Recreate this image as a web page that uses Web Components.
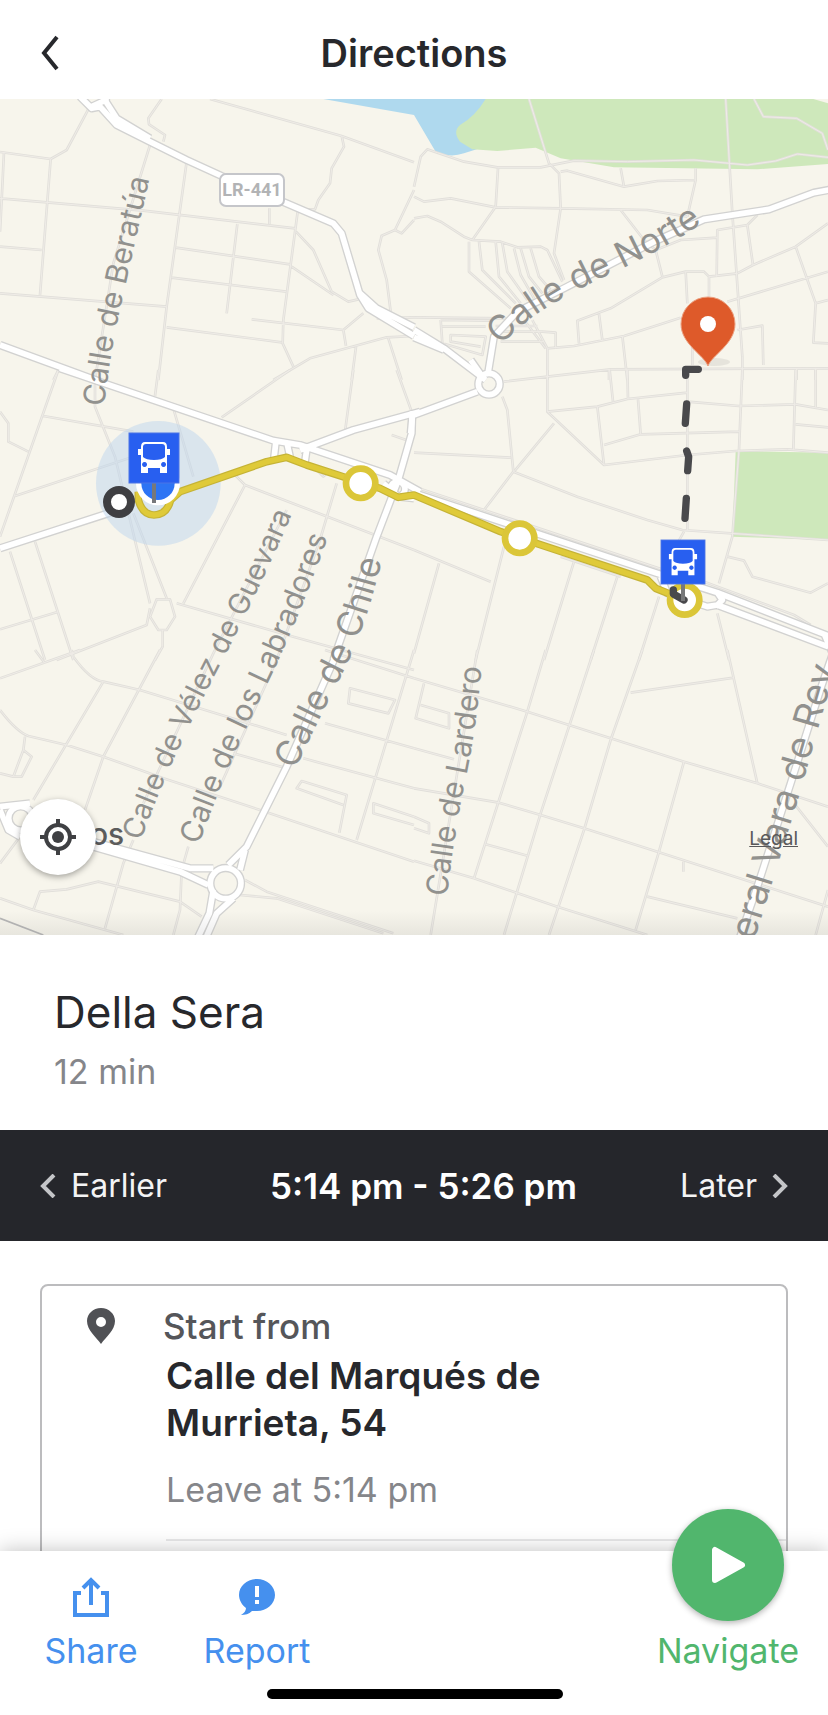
<!DOCTYPE html>
<html lang="en">
<head>
<meta charset="utf-8">
<meta name="viewport" content="width=device-width, initial-scale=1">
<title>Directions</title>
<style>
    body {
        margin: 0;
        background: #fff;
        color: #27282c;
        font-family: Inter, "Liberation Sans", sans-serif;
    }
</style>
</head>
<body>
<directions-app>
    <page-header slot="header">Directions</page-header>
    <route-map></route-map>
    <trip-summary>
        Della Sera
        <span slot="duration">12 min</span>
    </trip-summary>
    <time-bar earlier="Earlier" later="Later">5:14 pm - 5:26 pm</time-bar>
    <step-card>
        <span slot="title">Start from</span>
        <span slot="place">Calle del Marqués de Murrieta, 54</span>
        <span slot="time">Leave at 5:14 pm</span>
    </step-card>
    <action-bar slot="footer">
        <action-button icon="share">Share</action-button>
        <action-button icon="report">Report</action-button>
        <action-button icon="navigate" main>Navigate</action-button>
    </action-bar>
</directions-app>

<script>
class BaseElement extends HTMLElement {
    constructor() {
        super();
        this.attachShadow({mode: 'open'});
    }
    connectedCallback() {
        const template = document.createElement('template');
        template.innerHTML = this.getStyles() + this.getTemplate();
        this.shadowRoot.replaceChildren(template.content.cloneNode(true));
    }
}

class DirectionsApp extends BaseElement {
    getTemplate() {
        return `
            <slot name="header"></slot>
            <main><slot></slot></main>
            <slot name="footer"></slot>
        `;
    }
    getStyles() {
        return `
        <style>
            :host {
                display: flex;
                flex-direction: column;
                height: 100vh;
            }
            main {
                flex: 1;
                min-height: 0;
                overflow: auto;
                scrollbar-width: none;
            }
        </style>
        `;
    }
}
customElements.define('directions-app', DirectionsApp);

class PageHeader extends BaseElement {
    getTemplate() {
        return `
            <button aria-label="Back">
                <svg width="20" height="36" viewBox="0 0 20 36"><path d="M17 2 4 18l13 16" fill="none" stroke="#27282c" stroke-width="4"/></svg>
            </button>
            <h1><slot></slot></h1>
        `;
    }
    getStyles() {
        return `
        <style>
            :host {
                display: grid;
                grid-template-columns: 60px 1fr 60px;
                align-items: center;
                padding: 27px 20px 20px;
            }
            button {
                display: flex;
                justify-content: center;
                padding: 8px;
                border: 0;
                background: none;
            }
            h1 {
                margin: 0;
                font-size: 38px;
                line-height: 52px;
                font-weight: 600;
                text-align: center;
            }
        </style>
        `;
    }
}
customElements.define('page-header', PageHeader);

// Base map tiles: [x, y, streets, roads]
const tiles = [
    [0, 270, `M268 52 200 180 152 207 0 186M485 27 445 85 447 103 495 135 490 155M630 27 1025 138 1242 217
        M1025 138 1032 170 995 235 990 280 955 330 945 358 920 358M12 186 5 330 0 425M152 207 120 615
        M0 325 430 362 885 415M0 470 125 480M450 165 340 520 285 870M560 215 500 650 475 870M808 355V402
        M712 402 680 670M893 365 850 690 848 760 880 830M528 473 870 523M515 563 858 605M0 610 500 650
        M500 712 845 757M755 688 1030 720 1090 670M1030 720 1038 768M888 425 940 480 995 605 1045 635 1075 628
        M875 530 1000 615M1242 300 1185 420 1145 437 1135 480 1160 570 1172 665M1185 420 1205 430 1242 390
        M820 870 930 805 1160 742 1242 738M1068 770 1055 870M1165 745 1205 870M1130 685 1242 682M175 840 160 870`,
        `M240 20 275 55 300 50 350 105 450 155 560 210 665 258 860 340 1000 400 1025 430 1080 615 1105 655 1242 738
        M318 20 318 35 350 85 450 145M275 50 318 30M1080 610 1130 655 1242 712M0 765 300 875`],
    [1242, 270, `M0 290 20 200 40 178 70 188 150 215 250 232 380 232 480 212 640 215 840 210 1000 225 1085 213 1150 192 1242 202
        M345 27 405 220 435 250 440 355 420 490 450 570M252 235 245 350 175 450M440 245 460 242 630 290 730 273 845 270
        M620 235 630 290M845 235 845 270 820 380M0 320 30 335 110 325 245 352 440 355 700 360 820 380
        M0 385 40 378 80 395 150 440 175 450 260 455 310 472 380 470 400 480 445 575M165 455V545L290 655
        M195 455 205 540 305 640M245 455 255 560 320 640M265 460 280 545 340 630M300 475 320 555 360 625
        M320 475 345 560 385 610M350 475 375 560 410 600M935 27 955 370 985 800 985 870
        M1020 27 1048 80 1148 85 1225 130 1242 180M620 360 690 450 725 480 745 560M725 480 800 450 910 443
        M908 560 910 420 1000 405 1030 375M1000 405 1017 525
        M1242 400 1145 470 1017 525 970 550 885 560 870 545 815 545 745 562 590 655 490 692 495 760
        M1145 470 1205 640 1242 630M1205 640 1198 758 1242 760M1242 545 940 635M815 545 820 640M885 560V620
        M555 672 565 750M400 775 480 768 630 738 800 683M625 738 640 870M970 720 1045 707 1048 825
        M400 870V775L355 690M270 875 590 838 1242 835M585 840V870M835 760V825M1148 835V870M1205 835V870
        M0 682 280 685M80 690 85 760M80 690 230 692M85 710H215M85 760 205 795 215 740 110 735V755L200 770
        M260 725 385 725 425 728V775M260 755H390M245 708H370M330 690 395 775`,
        `M1260 297 1200 308 1065 358 870 388 720 455 450 595 310 665 240 740 222 850M0 720 90 775 215 870M0 742 90 780`],
    [0, 1110, `M175 0 0 500M475 0 465 78M870 0 665 142M1060 0 1035 185M1190 0 1235 125M0 125 25 160V215L85 245
        M130 138 400 185M285 30V110L345 260 450 700M45 378 400 260M520 115 580 320M400 430 500 685M30 545 135 870
        M105 515 220 870M0 778 175 725M170 870 440 765 450 715M470 688H510L525 740 500 780H475L450 740ZM488 780V830L465 870
        M530 700 880 800 1242 900M550 700 735 345 1242 540M735 345 700 310M1010 340 960 510 830 870 660 1250
        M860 420 640 850 430 1300M1175 195 1225 212M960 240 1000 260M950 300 970 320 990 300`,
        `M180 -5 820 212 900 225 1170 315 1260 365M0 535 340 425M900 240 1060 180 1260 125M1237 125 1235 190 1195 330 1130 500 1000 870
        M828 212 822 265M860 215 870 260M920 240 915 275M1150 340 1195 380 1242 385`],
    [1242, 1110, `M265 80 280 120 298 305 210 420M0 248 290 263M298 305 490 380 700 450 805 480 1242 510M300 305 420 160
        M400 0V125L570 285 820 255 965 243 1120 238 1242 248M400 125 550 110 640 87 820 68M550 110 570 285
        M570 225 680 193 975 185M672 88 680 193M640 0 642 87M587 0 597 95M985 0 975 240 955 500 915 640M820 0V480
        M820 95 975 108 1145 103 1242 120M1145 0 1138 240M1145 163 1242 172M1205 0V112M810 485 790 520
        M940 560 990 572 1015 620 1190 668 1242 640M0 540 230 635M75 580 0 850M270 530 185 870M480 575 390 870
        M610 620 530 870M735 680 675 870M910 730 945 870M440 560 620 620M0 350 750 600M870 635 1140 735 1190 765`,
        `M190 65-5 137M-4 125-10 190M-5 367 730 610 910 668 1242 797M740 620 760 670 880 710 910 705 1242 830M910 668 925 690 905 710M170 -30 205 20
        M1230 790 1260 860`],
    [0, 1950, `M0 85 240 0M105 0 135 40M215 0 220 20Q270 90 310 95L420 120 860 255M975 220 1242 295M700 310 860 355
        M910 325 1242 415M0 180Q50 245 85 258L200 285 310 320 490 385 780 480 1242 635M480 0 310 320 255 480M310 95 100 450
        M75 260 70 300 40 380 0 370M70 300 95 320 65 380H40M975 0 1242 85M1242 0 1070 570M1050 115 1185 150 1165 190 1045 160Z
        M1030 465 890 415 905 393 1040 435 1018 548M1242 500 1120 460V490L1242 525M400 570 370 640 315 835
        M565 590 545 660 540 780 520 855M0 745 100 780 370 855M100 780 120 725 200 718 295 695 540 755 605 800
        M735 690 800 725 1180 850M720 735 830 745 1150 850M60 560 0 640`,
        `M280 575 570 655 640 655M280 590 540 665 625 705M1015 0 860 350 740 590 685 645M720 660 735 600M700 745 650 790 615 870M640 720 628 790 590 870
        M0 470 90 460M0 480 25 540 60 560`],
    [1242, 1950, `M190 0 50 855M395 0 340 185 180 685M540 0 380 490 270 855M685 0 590 270 510 540 405 855M650 128 960 83
        M940 0 1030 400M0 85 340 185 590 265 810 335 1030 400 1242 470M0 295 120 328M0 415 255 458 380 495 510 535 730 605 1242 770
        M215 583 340 617M0 632 180 685 430 770 700 855M810 335 735 605 665 840M700 740 970 805M1242 720 1205 855
        M1140 460 1242 590M30 100 5 205 105 235V190L20 165M0 500 45 520V550L0 535M808 635V665`,
        `M1260 0 1222 110 1130 400 1030 710 975 870`]
];

const busSign = `
    <rect width="50" height="50" fill="#285ff0" stroke="#4b74e6"/>
    <path fill="#fff" fill-rule="evenodd" d="M16 9h18q4 0 4 5v2h3v6h-3v18h-7v-5H19v5h-7V22H9v-6h3v-2q0-5 4-5zM17 11q-3 0-3 3v10q3 3 11 3t11-3V14q0-3-3-3zM15.500 29a2.500 2.500 0 1 0 .1 0zM34.500 29a2.500 2.500 0 1 0 .1 0z"/>
`;

class RouteMap extends BaseElement {
    getRoads() {
        const layer = (index, cls) => tiles.map(t => `<path class="${cls}" transform="translate(${t[0]} ${t[1]})" d="${t[index]}"/>`).join('');
        const rings = cls => `
            <circle class="${cls}" cx="1467" cy="1152" r="32"/>
            <circle class="${cls}" cx="677" cy="2650" r="46"/>
            <circle class="${cls}" cx="62" cy="2455" r="36"/>
            <circle class="${cls}" cx="1193" cy="1467" r="22"/>`;
        return layer(2, 'street') + layer(2, 'street-in')
            + layer(3, 'road') + rings('road') + layer(3, 'road-in') + rings('road-in');
    }
    getTemplate() {
        return `
        <svg viewBox="0 0 828 836" role="img" aria-label="Route map">
            <defs>
                <linearGradient id="fade" x2="0" y2="1"><stop stop-color="#888" stop-opacity="0"/><stop offset="1" stop-color="#888" stop-opacity=".14"/></linearGradient>
                <path id="p1" d="M104 308Q110 255 121 206T154 60"/>
                <path id="p2" d="M502 247Q526 214 604 178T712 116"/>
                <path id="p3" d="M141 742Q164 674 218 570T304 386"/>
                <path id="p4" d="M199 746Q222 678 263 594T336 414"/>
                <path id="p5" d="M295 671Q318 622 344 571T388 434"/>
                <path id="p6" d="M447 798Q454 735 466 678T483 550"/>
                <path id="p7" d="M754 842 797 704 818 630 850 520"/>
            </defs>
            <svg width="828" height="836" viewBox="0 297 2484 2508">
                <rect y="297" width="2484" height="2508" fill="#f7f5ec"/>
                <path fill="#afd9ee" d="M970 297 1242 345 1307 455Q1350 475 1392 460L1430 448 1470 297Z"/>
                <path fill="#cee8bb" d="M1457 297Q1425 350 1380 375 1357 395 1380 425L1417 448 1492 453 1607 443 1682 475 1842 502 2272 508 2484 492V310L2440 297ZM2207 1353 2484 1358V1620L2197 1610Z"/>
                ${this.getRoads()}
                <path d="M0 2755 130 2805" stroke="#b5b5b5" stroke-width="5"/>
                <circle cx="475" cy="1450" r="187" fill="#bed6ee" fill-opacity=".5"/>
                <g fill="none" stroke-linejoin="round">
                    <path class="route-edge" d="M415 1475V1500Q428 1545 462 1545 500 1545 512 1500L540 1475 800 1385 860 1372 920 1395 1035 1432 1140 1465 1195 1492 1242 1485 1502 1595 1942 1740 1967 1765 2054 1800"/>
                    <path class="route" d="M415 1475V1500Q428 1545 462 1545 500 1545 512 1500L540 1475 800 1385 860 1372 920 1395 1035 1432 1140 1465 1195 1492 1242 1485 1502 1595 1942 1740 1967 1765 2054 1800"/>
                </g>
                <g class="stop">
                    <circle cx="1082" cy="1450" r="44"/>
                    <circle cx="1559" cy="1615" r="44"/>
                    <circle cx="2054" cy="1800" r="44"/>
                </g>
                <path class="walk" d="M2095 1108H2057V1126M2060 1212 2056 1270M2060 1353 2066 1370 2063 1412M2059 1495 2055 1555M2020 1770V1782L2052 1800"/>
                <circle cx="474" cy="1450" r="66" fill="#fff"/>
                <circle cx="474" cy="1450" r="50" fill="#2d74f4"/>
                <circle cx="357" cy="1506" r="36" fill="#fff" stroke="#3f3f42" stroke-width="24"/>
            </svg>
            <g class="label">
                <text class="small"><textPath href="#p1">Calle de Beratúa</textPath></text>
                <text class="large"><textPath href="#p2">Calle de Norte</textPath></text>
                <text class="long"><textPath href="#p3">Calle de Vélez de Guevara</textPath></text>
                <text class="small"><textPath href="#p4">Calle de los Labradores</textPath></text>
                <text class="large"><textPath href="#p5">Calle de Chile</textPath></text>
                <text class="small"><textPath href="#p6">Calle de Lardero</textPath></text>
                <text class="huge"><textPath href="#p7">eral Vara de Rey</textPath></text>
                <text class="town" x="90" y="746">os</text>
            </g>
            <rect x="220" y="75" width="64" height="32" rx="6" fill="#fff" stroke="#c5c6ca" stroke-width="2"/>
            <text class="shield" x="252" y="97">LR-441</text>
            <path d="M154 382v22" stroke="#77787a" stroke-width="4"/>
            <g transform="translate(129 334)">${busSign}</g>
            <path d="M683 484v18" stroke="#77787a" stroke-width="4"/>
            <g transform="translate(661 441) scale(.88)">${busSign}</g>
            <ellipse cx="714" cy="263" rx="16" ry="4" fill="#888" fill-opacity=".15"/>
            <path d="M708 267C704 256 681 245 681 225A27 27 0 0 1 735 225C735 245 712 256 708 267Z" fill="#de5a2a" stroke="#eca080"/>
            <circle cx="708" cy="225" r="8" fill="#fff"/>
            <rect y="812" width="828" height="24" fill="url(#fade)"/>
        </svg>
        <button aria-label="My location">
            <svg width="36" height="36" viewBox="0 0 36 36"><circle cx="18" cy="18" r="12" fill="none" stroke="#3f4043" stroke-width="4"/><circle cx="18" cy="18" r="6" fill="#3f4043"/><path d="M18 0v6M18 30v6M0 18h6M30 18h6" stroke="#3f4043" stroke-width="4"/></svg>
        </button>
        <a href="#legal">Legal</a>
        `;
    }
    getStyles() {
        return `
        <style>
            :host {
                display: block;
                position: relative;
                overflow: hidden;
            }
            :host > svg {
                display: block;
            }
            .street, .street-in, .road, .road-in {
                fill: none;
                stroke-linejoin: round;
            }
            .street { stroke: #e1dfda; stroke-width: 8; }
            .street-in { stroke: #efece7; stroke-width: 3; }
            .road { stroke: #d2d2d1; stroke-width: 25; }
            .road-in { stroke: #fff; stroke-width: 17; }
            .route-edge { stroke: #c5b336; stroke-width: 23; }
            .route { stroke: #dfca39; stroke-width: 16; }
            .stop { fill: #fff; stroke: #dbc638; stroke-width: 20; }
            .walk { fill: none; stroke: #49494c; stroke-width: 22; stroke-linecap: round; stroke-linejoin: round; }
            .label { fill: #91918e; }
            .small { font-size: 30px; }
            .long { font-size: 29px; }
            .large { font-size: 35px; }
            .huge { font-size: 37px; }
            .town { font-size: 30px; font-weight: 500; fill: #5c5c5c; }
            .shield {
                font: bold 18px Roboto, sans-serif;
                fill: #b2b3b5;
                text-anchor: middle;
            }
            button {
                position: absolute;
                left: 20px;
                bottom: 60px;
                width: 76px;
                height: 76px;
                padding: 20px;
                border: 0;
                border-radius: 50%;
                background: #fff;
                box-shadow: 0 2px 6px rgba(0, 0, 0, .35);
            }
            a {
                position: absolute;
                right: 30px;
                bottom: 84px;
                color: #58585a;
                font-size: 19px;
                line-height: 24px;
            }
        </style>
        `;
    }
}
customElements.define('route-map', RouteMap);

class TripSummary extends BaseElement {
    getTemplate() {
        return `
            <h2><slot></slot></h2>
            <p><slot name="duration"></slot></p>
        `;
    }
    getStyles() {
        return `
        <style>
            :host {
                display: block;
                padding: 47px 54px 37px;
            }
            h2 {
                margin: 0;
                font-size: 44px;
                line-height: 60px;
                font-weight: 400;
            }
            p {
                margin: 8px 0 0;
                font-size: 34px;
                line-height: 43px;
                color: #85868a;
            }
        </style>
        `;
    }
}
customElements.define('trip-summary', TripSummary);

class TimeBar extends BaseElement {
    getTemplate() {
        return `
            <button>
                <svg width="16" height="24" viewBox="0 0 16 24"><path d="M14 1 3 12l11 11"/></svg>
                ${this.getAttribute('earlier')}
            </button>
            <strong><slot></slot></strong>
            <button>
                ${this.getAttribute('later')}
                <svg width="16" height="24" viewBox="0 0 16 24"><path d="m2 1 11 11L2 23"/></svg>
            </button>
        `;
    }
    getStyles() {
        return `
        <style>
            :host {
                display: flex;
                justify-content: space-between;
                align-items: center;
                padding: 34px 40px 33px;
                background: #25262b;
                color: #fff;
            }
            button {
                display: flex;
                align-items: center;
                gap: 15px;
                padding: 0;
                border: 0;
                background: none;
                color: #f4f4f5;
                font: inherit;
                font-size: 32px;
                line-height: 44px;
            }
            strong {
                font-size: 35px;
                line-height: 44px;
                font-weight: 600;
            }
            path {
                fill: none;
                stroke: #c4c5c8;
                stroke-width: 4;
            }
        </style>
        `;
    }
}
customElements.define('time-bar', TimeBar);

class StepCard extends BaseElement {
    getTemplate() {
        return `
            <section>
                <svg width="28" height="36" viewBox="0 0 28 36"><path fill="#505155" fill-rule="evenodd" d="M14 0C6 0 0 6 0 13c0 9 9 16 14 23 5-7 14-14 14-23C28 6 22 0 14 0zm0 9a5 5 0 1 1 0 10 5 5 0 0 1 0-10z"/></svg>
                <div>
                    <h3><slot name="title"></slot></h3>
                    <p class="place"><slot name="place"></slot></p>
                    <p class="time"><slot name="time"></slot></p>
                    <hr>
                </div>
            </section>
        `;
    }
    getStyles() {
        return `
        <style>
            :host {
                display: block;
                padding: 43px 40px 0;
            }
            section {
                display: flex;
                gap: 48px;
                padding: 18px 0 80px 45px;
                border: 2px solid #bcbcbe;
                border-radius: 8px;
            }
            svg {
                flex: none;
                margin-top: 4px;
            }
            div {
                flex: 1;
            }
            h3, p {
                margin: 0;
            }
            h3 {
                font-size: 35px;
                line-height: 44px;
                font-weight: 500;
                color: #55565a;
            }
            .place {
                max-width: 480px;
                padding: 4px 0 0 3px;
                font-size: 37px;
                line-height: 47px;
                font-weight: 600;
            }
            .time {
                padding: 22px 0 0 3px;
                font-size: 34px;
                line-height: 44px;
                color: #85868a;
            }
            hr {
                margin: 27px 0 0 3px;
                border: 0;
                border-top: 2px solid #e8e8e9;
            }
        </style>
        `;
    }
}
customElements.define('step-card', StepCard);

class ActionBar extends BaseElement {
    getTemplate() {
        return `
            <nav><slot></slot></nav>
            <div></div>
        `;
    }
    getStyles() {
        return `
        <style>
            :host {
                display: block;
                position: relative;
                padding: 0 29px 16px 31px;
                background: #fff;
                box-shadow: 0 0 20px rgba(0, 0, 0, .25);
            }
            nav {
                display: flex;
                align-items: flex-end;
                gap: 46px;
            }
            div {
                width: 296px;
                height: 10px;
                margin: 16px auto 0;
                border-radius: 5px;
                background: #000;
            }
        </style>
        `;
    }
}
customElements.define('action-bar', ActionBar);

const icons = {
    share: `<svg width="36" height="40" viewBox="0 0 36 40" fill="none" stroke="currentColor" stroke-width="4"><path d="M8 16H2v22h32V16h-6M18 28V4M10 11l8-8 8 8"/></svg>`,
    report: `<svg width="36" height="40" viewBox="0 0 36 40"><path fill="currentColor" d="M18 2a18 16 0 1 1 0 32c-2 0-4 0-5 0-3 3-7 4-11 4 3-2 5-4 5-7C3 28 0 23 0 18 0 9 8 2 18 2z"/><path stroke="#fff" stroke-width="4" d="M18 9v11M18 23v4"/></svg>`,
    navigate: `<svg width="112" height="112" viewBox="0 0 112 112"><path fill="#fff" stroke="#fff" stroke-width="6" stroke-linejoin="round" d="M43 41v30l27-15z"/></svg>`
};

class ActionButton extends BaseElement {
    getTemplate() {
        return `
            <button>
                ${icons[this.getAttribute('icon')]}
                <span><slot></slot></span>
            </button>
        `;
    }
    getStyles() {
        return `
        <style>
            :host {
                display: block;
                color: #4590ee;
            }
            :host([main]) {
                margin: -42px 0 0 auto;
                color: #51b66d;
            }
            button {
                display: flex;
                flex-direction: column;
                align-items: center;
                gap: 12px;
                min-width: 120px;
                padding: 0;
                border: 0;
                background: none;
                color: inherit;
                font: inherit;
                font-size: 34px;
                line-height: 44px;
            }
            :host([main]) button {
                gap: 8px;
            }
            :host([main]) svg {
                border-radius: 50%;
                background: currentColor;
                box-shadow: 0 2px 6px rgba(0, 0, 0, .3);
            }
        </style>
        `;
    }
}
customElements.define('action-button', ActionButton);
</script>
</body>
</html>
